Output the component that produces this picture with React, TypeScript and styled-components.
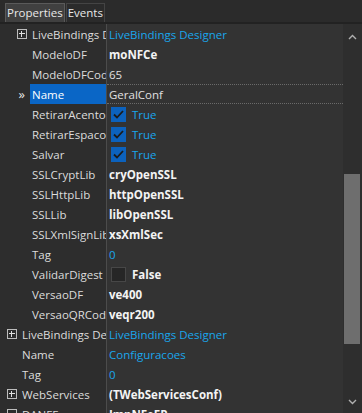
import React from "react";
import styled, { createGlobalStyle, css } from "styled-components";

const GlobalStyle = createGlobalStyle`
  html, body {
    margin: 0;
    padding: 0;
    background: #2b2b2b;
    overflow: hidden;
  }
  * { box-sizing: border-box; }
`;

const StyledPanel = styled.div`
  width: 362px;
  height: 413px;
  display: flex;
  flex-direction: column;
  background: #2b2b2b;
  font-family: "Open Sans", "Noto Sans", sans-serif;
  font-size: 11.5px;
  color: #dcdcdc;
  overflow: hidden;
`;

const StyledTabBar = styled.div`
  height: 24px;
  display: flex;
  align-items: flex-end;
  padding: 3px 0 0 5px;
  background: #2b2b2b;
  border-bottom: 2px solid #222;
`;

const StyledTab = styled.div<{ $active?: boolean }>`
  height: 19px;
  line-height: 18px;
  padding: 0 1px;
  color: #e8e8e8;
  border: 1px solid ${(p) => (p.$active ? "#5a5a5a" : "#444")};
  border-bottom: none;
  background: ${(p) => (p.$active ? "#404040" : "#2b2b2b")};
  margin-right: 1px;
`;

const StyledBody = styled.div`
  flex: 1;
  display: flex;
  min-height: 0;
`;

const StyledGrid = styled.div`
  flex: 1;
  display: flex;
  flex-direction: column;
  overflow: hidden;
`;

const StyledRow = styled.div`
  display: flex;
  height: 20px;
  flex-shrink: 0;
`;

const StyledNameArea = styled.div`
  width: 107px;
  flex-shrink: 0;
  display: flex;
  border-right: 1px solid #4c4c4c;
  background: #2d2d2d;
`;

const StyledGutter = styled.div<{ $width: number }>`
  width: ${(p) => p.$width}px;
  flex-shrink: 0;
  display: flex;
  align-items: center;
  justify-content: flex-end;
`;

const StyledNameCell = styled.div<{ $selected?: boolean }>`
  flex: 1;
  min-width: 0;
  line-height: 21px;
  padding-left: 2px;
  background: ${(p) => (p.$selected ? "#0a66c6" : "#2d2d2d")};
  color: ${(p) => (p.$selected ? "#ffffff" : "#dcdcdc")};
  white-space: nowrap;
  overflow: hidden;
`;

const StyledValueCell = styled.div<{ $selected?: boolean }>`
  flex: 1;
  display: flex;
  align-items: center;
  gap: 6px;
  padding-left: 2px;
  background: #333333;
  white-space: nowrap;
  overflow: hidden;
  ${(p) =>
    p.$selected &&
    css`
      border-top: 1px dotted #6a6a6a;
      border-bottom: 1px dotted #6a6a6a;
    `}
`;

const StyledValue = styled.span<{ $kind: "plain" | "bold" | "link" }>`
  padding-top: 1px;
  color: ${(p) => (p.$kind === "link" ? "#1aa6ec" : p.$kind === "bold" ? "#f4f4f4" : "#e0e0e0")};
  font-weight: ${(p) => (p.$kind === "bold" ? 700 : 400)};
`;

const StyledExpander = styled.div`
  width: 10px;
  height: 10px;
  margin-right: 3px;
  border: 1px solid #bdbdbd;
  position: relative;
  flex-shrink: 0;

  &::before {
    content: "";
    position: absolute;
    left: 1px;
    right: 1px;
    top: 3px;
    height: 1px;
    background: #e0e0e0;
  }
`;

const StyledPlus = styled(StyledExpander)`
  &::after {
    content: "";
    position: absolute;
    top: 1px;
    bottom: 1px;
    left: 3px;
    width: 1px;
    background: #e0e0e0;
  }
`;

const StyledMarker = styled.span`
  color: #e8e8e8;
  font-size: 13px;
  margin-right: 5px;
`;

const StyledCheck = styled.div<{ $checked: boolean }>`
  width: 15px;
  height: 15px;
  margin-left: 2px;
  flex-shrink: 0;
  display: flex;
  align-items: center;
  justify-content: center;
  background: ${(p) => (p.$checked ? "#0c62bd" : "#262626")};
  border: 1px solid ${(p) => (p.$checked ? "#0c62bd" : "#474747")};
`;

const StyledScrollbar = styled.div`
  width: 19px;
  flex-shrink: 0;
  background: #2e2e2e;
  display: flex;
  flex-direction: column;
  align-items: center;
  padding: 4px 0 2px;
`;

const StyledArrow = styled.div`
  height: 18px;
  display: flex;
  align-items: center;
  justify-content: center;
`;

const StyledTrack = styled.div`
  flex: 1;
  width: 100%;
  display: flex;
  flex-direction: column;
  padding: 0 2px 0 1px;
`;

const StyledThumb = styled.div`
  margin-top: 128px;
  height: 170px;
  background: #6e6e6e;
`;

type Row = {
  name: string;
  indent: number;
  value: string;
  kind: "plain" | "bold" | "link";
  expand?: "plus" | "minus";
  check?: boolean;
  selected?: boolean;
};

// indent = x of the name text
const rows: Row[] = [
  { name: "LiveBindings Designer", indent: 32, value: "LiveBindings Designer", kind: "link", expand: "plus" },
  { name: "ModeloDF", indent: 32, value: "moNFCe", kind: "bold" },
  { name: "ModeloDFCodigo", indent: 32, value: "65", kind: "plain" },
  { name: "Name", indent: 32, value: "GeralConf", kind: "plain", selected: true },
  { name: "RetirarAcentos", indent: 32, value: "True", kind: "link", check: true },
  { name: "RetirarEspacos", indent: 32, value: "True", kind: "link", check: true },
  { name: "Salvar", indent: 32, value: "True", kind: "link", check: true },
  { name: "SSLCryptLib", indent: 32, value: "cryOpenSSL", kind: "bold" },
  { name: "SSLHttpLib", indent: 32, value: "httpOpenSSL", kind: "bold" },
  { name: "SSLLib", indent: 32, value: "libOpenSSL", kind: "bold" },
  { name: "SSLXmlSignLib", indent: 32, value: "xsXmlSec", kind: "bold" },
  { name: "Tag", indent: 32, value: "0", kind: "link" },
  { name: "ValidarDigest", indent: 32, value: "False", kind: "bold", check: false },
  { name: "VersaoDF", indent: 32, value: "ve400", kind: "bold" },
  { name: "VersaoQRCode", indent: 32, value: "veqr200", kind: "bold" },
  { name: "LiveBindings Designer", indent: 22, value: "LiveBindings Designer", kind: "link", expand: "plus" },
  { name: "Name", indent: 22, value: "Configuracoes", kind: "link" },
  { name: "Tag", indent: 22, value: "0", kind: "link" },
  { name: "WebServices", indent: 22, value: "(TWebServicesConf)", kind: "bold", expand: "plus" },
  { name: "DANFE", indent: 22, value: "ImpNFeFR", kind: "bold", expand: "minus" },
];

const CheckMark = () => (
  <svg width="11" height="9" viewBox="0 0 11 9">
    <path d="M1 4.5 L4 7.5 L10 1" fill="none" stroke="#1b1b1b" strokeWidth="1.8" />
  </svg>
);

const Chevron = ({ up }: { up?: boolean }) => (
  <svg width="9" height="6" viewBox="0 0 9 6">
    <path
      d={up ? "M1 5 L4.5 1.5 L8 5" : "M1 1 L4.5 4.5 L8 1"}
      fill="none"
      stroke="#b0b0b0"
      strokeWidth="1.4"
    />
  </svg>
);

const PropertyRow = ({ row }: { row: Row }) => (
  <StyledRow>
    <StyledNameArea>
      <StyledGutter $width={row.indent - 2}>
        {row.selected && <StyledMarker>»</StyledMarker>}
        {row.expand === "plus" && <StyledPlus />}
        {row.expand === "minus" && <StyledExpander />}
      </StyledGutter>
      <StyledNameCell $selected={row.selected}>{row.name}</StyledNameCell>
    </StyledNameArea>
    <StyledValueCell $selected={row.selected}>
      {row.check !== undefined && (
        <StyledCheck $checked={row.check}>{row.check && <CheckMark />}</StyledCheck>
      )}
      <StyledValue $kind={row.kind}>{row.value}</StyledValue>
    </StyledValueCell>
  </StyledRow>
);

const App = () => {
  return (
    <>
      <GlobalStyle />
      <StyledPanel>
        <StyledTabBar>
          <StyledTab $active>Properties</StyledTab>
          <StyledTab>Events</StyledTab>
        </StyledTabBar>
        <StyledBody>
          <StyledGrid>
            {rows.map((row, i) => (
              <PropertyRow key={i} row={row} />
            ))}
          </StyledGrid>
          <StyledScrollbar>
            <StyledArrow>
              <Chevron up />
            </StyledArrow>
            <StyledTrack>
              <StyledThumb />
            </StyledTrack>
            <StyledArrow>
              <Chevron />
            </StyledArrow>
          </StyledScrollbar>
        </StyledBody>
      </StyledPanel>
    </>
  );
};

export default App;
